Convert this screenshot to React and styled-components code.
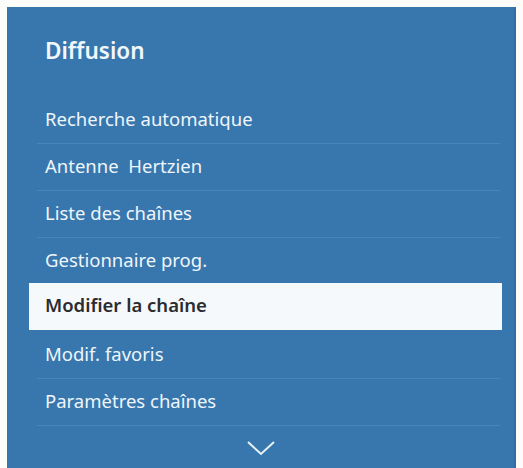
import React from "react";
import styled, { createGlobalStyle } from "styled-components";

const GlobalStyle = createGlobalStyle`
  html, body {
    margin: 0;
    padding: 0;
    background: #fcfcf8;
  }
  body {
    font-family: "Noto Sans", "Open Sans", sans-serif;
  }
`;

const Panel = styled.div`
  margin: 7px 7px 0 7px;
  height: 461px;
  background-color: #3877ad;
  border-right: 2px solid #336ea2;
  display: flex;
  flex-direction: column;
  box-sizing: border-box;
`;

const Title = styled.h2`
  margin: 0;
  height: 90px;
  box-sizing: border-box;
  padding: 29px 38px 0;
  font-size: 22.5px;
  font-weight: 600;
  line-height: 30px;
  color: #f2f7fc;
`;

const MenuList = styled.div`
  margin: 0 12px 0 22px;
  display: flex;
  flex-direction: column;
`;

const MenuItem = styled.div`
  position: relative;
  height: 47px;
  box-sizing: border-box;
  display: flex;
  align-items: center;
  padding: 0 0 4px 16px;
  font-size: 18.5px;
  font-weight: ${(p) => (p.$active ? 600 : 400)};
  color: ${(p) => (p.$active ? "#2a2c2f" : "#eef5fb")};
  background-color: ${(p) => (p.$active ? "#f6f9fc" : "transparent")};
  margin-top: ${(p) => (p.$active ? "-2px" : "0")};
  margin-bottom: ${(p) => (p.$active ? "2px" : "0")};
  white-space: pre;

  &::after {
    content: "";
    position: absolute;
    left: 8px;
    right: 2px;
    bottom: 0;
    height: 1px;
    background-color: ${(p) => (p.$active ? "transparent" : "#4985b9")};
  }
`;

const MoreRow = styled.div`
  flex: 1;
  display: flex;
  justify-content: center;
  align-items: flex-start;
  padding-top: 14px;
`;

const items = [
  "Recherche automatique",
  "Antenne  Hertzien",
  "Liste des chaînes",
  "Gestionnaire prog.",
  "Modifier la chaîne",
  "Modif. favoris",
  "Paramètres chaînes",
];

const App = () => {
  return (
    <>
      <GlobalStyle />
      <Panel>
        <Title>Diffusion</Title>
        <MenuList>
          {items.map((label) => (
            <MenuItem key={label} $active={label === "Modifier la chaîne"}>
              {label}
            </MenuItem>
          ))}
        </MenuList>
        <MoreRow>
          <svg width="30" height="16" viewBox="0 0 30 16">
            <path
              d="M2 2 L15 14 L28 2"
              fill="none"
              stroke="#e6f0f8"
              strokeWidth="2"
            />
          </svg>
        </MoreRow>
      </Panel>
    </>
  );
};

export default App;
